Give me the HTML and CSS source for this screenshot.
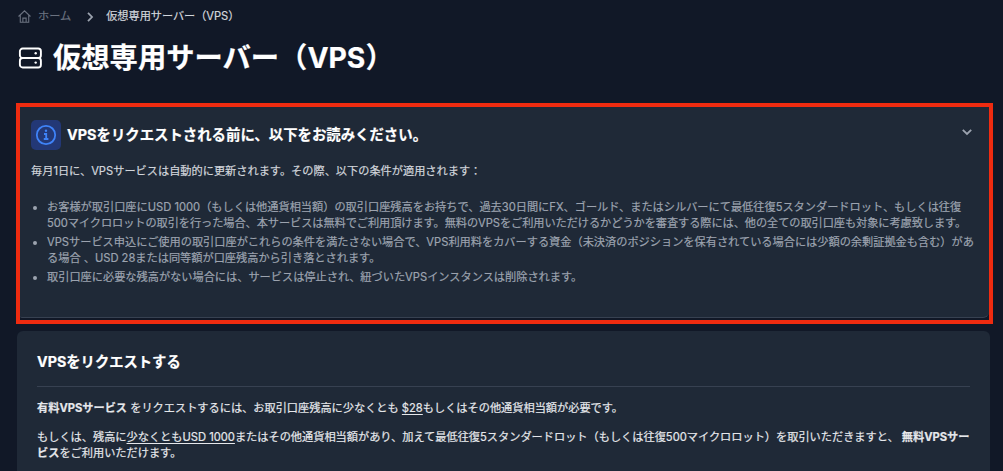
FILE: index.html
```
<!DOCTYPE html>
<html lang="ja">
<head>
  <meta charset="UTF-8">
  <title>仮想専用サーバー（VPS）</title>
  <link rel="stylesheet" href="styles.css">
</head>
<body>

  <nav class="breadcrumb">
    <svg class="home-icon" viewBox="0 0 24 24">
      <path d="M1 12 12 1.5 23 12M4.2 9.5V22.5h15.6V9.5M9 22.5v-7.5h6v7.5"/>
    </svg>
    <a class="crumb-home">ホーム</a>
    <svg class="crumb-arrow" viewBox="0 0 8 12"><path d="M2 1.8 6 6 2 10.2"/></svg>
    <span class="crumb-current">仮想専用サーバー（VPS）</span>
  </nav>

  <h1 class="page-title">
    <svg class="server-icon" viewBox="0 0 24 22">
      <rect x="1.9" y="1.5" width="21" height="9.5" rx="2.8"/>
      <rect x="1.9" y="11" width="21" height="9.5" rx="2.8"/>
      <circle cx="17.7" cy="6.3" r="1.2"/>
      <circle cx="17.7" cy="15.6" r="1.2"/>
    </svg>
    <span>仮想専用サーバー（VPS）</span>
  </h1>

  <section class="highlight">
    <div class="notice">
      <div class="notice-header">
        <div class="info-badge">
          <svg viewBox="0 0 22 22">
            <circle cx="11" cy="11" r="9.2"/>
            <path d="M9 10h2.2v5M8.8 15h4.6"/>
            <circle class="dot" cx="11" cy="6.7" r="1.2"/>
          </svg>
        </div>
        <h2>VPSをリクエストされる前に、以下をお読みください。</h2>
        <svg class="chevron" viewBox="0 0 12 8"><path d="M1.8 1.8 6 6l4.2-4.2"/></svg>
      </div>
      <p class="notice-lead">毎月1日に、VPSサービスは自動的に更新されます。その際、以下の条件が適用されます：</p>
      <ul class="terms">
        <li>お客様が取引口座にUSD 1000（もしくは他通貨相当額）の取引口座残高をお持ちで、過去30日間にFX、ゴールド、またはシルバーにて最低往復5スタンダードロット、もしくは往復<br><span class="tight">500マイクロロットの取引を行った場合、本サービスは無料でご利用頂けます。無料のVPSをご利用いただけるかどうかを審査する際には、他の全ての取引口座も対象に考慮致します。</span></li>
        <li>VPSサービス申込にご使用の取引口座がこれらの条件を満たさない場合で、VPS利用料をカバーする資金（未決済のポジションを保有されている場合には少額の余剰証拠金も含む）があ<br>る場合 、USD 28または同等額が口座残高から引き落とされます。</li>
        <li>取引口座に必要な残高がない場合には、サービスは停止され、紐づいたVPSインスタンスは削除されます。</li>
      </ul>
    </div>
  </section>

  <section class="request">
    <h2>VPSをリクエストする</h2>
    <p><b>有料VPSサービス</b> をリクエストするには、お取引口座残高に少なくとも <u>$28</u>もしくはその他通貨相当額が必要です。</p>
    <p>もしくは、残高に<u>少なくともUSD 1000</u>またはその他通貨相当額があり、加えて最低往復5スタンダードロット（もしくは往復500マイクロロット）を取引いただきますと、 <b>無料VPSサー<br>ビス</b>をご利用いただけます。</p>
  </section>

</body>
</html>
```
FILE: styles.css
```
* {
  box-sizing: border-box;
}
body {
  margin: 0;
  height: 471px;
  overflow: hidden;
  background-color: #111827;
  color: #e5e7eb;
  font-family: Inter, "Noto Sans CJK JP", sans-serif;
  font-size: 11.2px;
  line-height: 16px;
  white-space: nowrap;
  -webkit-text-stroke: 0.2px;
}
h1, h2, p, ul {
  margin: 0;
}
svg {
  fill: none;
  stroke: currentColor;
  flex: none;
}
.breadcrumb {
  display: flex;
  align-items: center;
  height: 32px;
  padding-left: 18px;
}
.home-icon {
  width: 13px;
  height: 13px;
  color: #6b7280;
  stroke-width: 2;
}
.crumb-home {
  margin-left: 7px;
  color: #6b7280;
}
.crumb-arrow {
  width: 8px;
  height: 12px;
  margin: 1px 12px 0 15px;
  color: #9ca3af;
  stroke-width: 1.8;
}
.crumb-current {
  color: #d1d5db;
  letter-spacing: -0.05px;
}
.page-title {
  display: flex;
  align-items: center;
  height: 50px;
  padding: 1px 0 0 18px;
  color: #fff;
  font-size: 28.3px;
  line-height: 40px;
}
.server-icon {
  width: 24px;
  height: 22px;
  margin-right: 11px;
  stroke-width: 1.9;
}
.server-icon circle {
  fill: currentColor;
  stroke: none;
}
.highlight {
  width: 977px;
  height: 221px;
  margin: 21px 0 0 16px;
  border: 4px solid #ef2b10;
}
.notice {
  height: 211px;
  padding: 13px 11px;
  border-bottom: 1px solid #374151;
  border-radius: 0 0 6px 2px;
  background-color: #1f2937;
}
.notice-header {
  display: flex;
  align-items: center;
  height: 30px;
}
.notice-header h2 {
  margin-left: 6px;
  font-size: 14.4px;
}
h2 {
  color: #fff;
  font-size: 14.3px;
  line-height: 20px;
}
.info-badge {
  display: flex;
  align-items: center;
  justify-content: center;
  width: 30px;
  height: 30px;
  border-radius: 5px;
  background-color: #233876;
  color: #3f83f8;
}
.info-badge svg {
  width: 22px;
  height: 22px;
  stroke-width: 1.8;
}
.info-badge .dot {
  fill: currentColor;
  stroke: none;
}
.chevron {
  width: 12px;
  height: 8px;
  margin: 0 5px 6px auto;
  color: #9ca3af;
  stroke-width: 1.8;
}
.notice-lead {
  margin-top: 13px;
  color: #d1d5db;
}
.terms {
  margin-top: 20px;
  padding-left: 16px;
  color: #9ca3af;
}
.terms li {
  margin-bottom: 3px;
}
.terms .tight {
  letter-spacing: -0.06px;
}
.request {
  height: 160px;
  margin: 7px 13px 0 17px;
  padding: 21px 20px;
  border-radius: 6px;
  background-color: #1f2937;
}
.request h2 {
  height: 35px;
  margin-bottom: 13px;
  border-bottom: 1px solid #374151;
}
.request p {
  margin-bottom: 13px;
}
.request u {
  text-underline-offset: 2px;
}
```
